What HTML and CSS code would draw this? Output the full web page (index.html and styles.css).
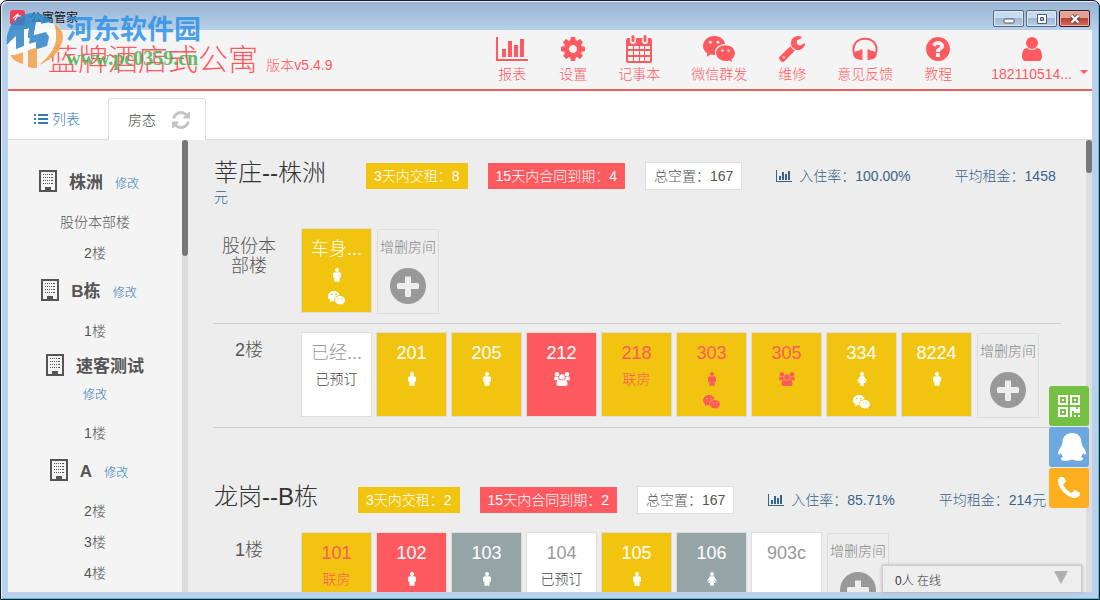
FILE: index.html
```
<!DOCTYPE html>
<html lang="zh-CN">
<head>
<meta charset="utf-8">
<title>公寓管家</title>
<link rel="stylesheet" href="styles.css">
</head>
<body>
<svg class="sprite" aria-hidden="true">
  <symbol id="chart" viewBox="0 0 32 24"><path d="M0 0h2v22h30v2H0zM6 12h4v8H6zM12 4h4v16h-4zM18 8h4v12h-4zM24 2h4v18h-4z"/></symbol>
  <symbol id="cog" viewBox="128 128 1536 1536"><path d="M1152 896q0-106-75-181t-181-75-181 75-75 181 75 181 181 75 181-75 75-181zm512-109v222q0 12-8 23t-20 13l-185 28q-19 54-39 91 35 50 107 138 10 12 10 25t-9 23q-27 37-99 108t-94 71q-12 0-26-9l-138-108q-44 23-91 38-16 136-29 186-7 28-36 28h-222q-14 0-24.500-8.500t-11.500-21.500l-28-184q-49-16-90-37l-141 107q-10 9-25 9-14 0-25-11-126-114-165-168-7-10-7-23 0-12 8-23 15-21 51-66.500t54-70.500q-27-50-41-99l-183-27q-13-2-21-12.500t-8-23.500v-222q0-12 8-23t19-13l186-28q14-46 39-92-40-57-107-138-10-12-10-24 0-10 9-23 26-36 98.500-107.500t94.500-71.500q13 0 26 10l138 107q44-23 91-38 16-136 29-186 7-28 36-28h222q14 0 24.500 8.500t11.500 21.500l28 184q49 16 90 37l142-107q9-9 24-9 13 0 25 10 129 119 165 170 7 8 7 22 0 12-8 23-15 21-51 66.500t-54 70.500q26 50 41 98l183 28q13 2 21 12.500t8 23.500z"/></symbol>
  <symbol id="calendar" viewBox="0 0 26 28"><path fill-rule="evenodd" d="M2 3h2v3a3 3 0 0 0 6 0V3h6v3a3 3 0 0 0 6 0V3h2a2 2 0 0 1 2 2v21a2 2 0 0 1-2 2H2a2 2 0 0 1-2-2V5a2 2 0 0 1 2-2zM2 11v3h5v-3zM8 11v3h5v-3zM14 11v3h4v-3zM19 11v3h5v-3zM2 16v4h5v-4zM8 16v4h5v-4zM14 16v4h4v-4zM19 16v4h5v-4zM2 22v4h5v-4zM8 22v4h5v-4zM14 22v4h4v-4zM19 22v4h5v-4z"/><rect x="5.500" width="3" height="7" rx="1.500"/><rect x="17.500" width="3" height="7" rx="1.500"/></symbol>
  <symbol id="wechat" viewBox="0 0 32 26"><path fill-rule="evenodd" d="M11 0c6 0 10.500 3.500 11 8-6 0-10.500 4-10 9.500l.3 1.500c-2 .2-3 0-4.800-.4L3.500 21l1-3.600C1.500 15.500 0 13 0 10 0 4.500 5 0 11 0zM7.400 4.800a1.500 1.500 0 1 0 .01 0zM15 4.800a1.500 1.500 0 1 0 .01 0z"/><path fill-rule="evenodd" d="M22.500 9.200c5.300 0 9.500 3.600 9.500 8 0 2.500-1.500 4.600-3.600 6.200l.7 2.600-3-1.600c-1.200.4-2.400.6-3.600.6-5.300 0-9.500-3.500-9.500-7.900s4.200-7.900 9.500-7.900zM19.400 13.300a1.200 1.200 0 1 0 .01 0zM25.500 13.300a1.200 1.200 0 1 0 .01 0z"/></symbol>
  <symbol id="wrench" viewBox="85 128 1641 1643"><path d="M448 1472q0-26-19-45t-45-19-45 19-19 45 19 45 45 19 45-19 19-45zm644-420l-682 682q-37 37-90 37-52 0-91-37l-106-108q-38-36-38-90 0-53 38-91l681-681q39 98 114.500 173.500t173.500 114.500zm634-435q0 39-23 106-47 134-164.500 217.500t-258.500 83.500q-185 0-316.500-131.500t-131.500-316.500 131.500-316.500 316.500-131.500q58 0 121.500 16.500t107.500 46.500q16 11 16 28t-16 28l-293 169v224l193 107q5-3 79-48.500t135.500-81 70.500-35.500q15 0 23.500 10t8.500 25z"/></symbol>
  <symbol id="headphones" viewBox="0 0 26 23"><path d="M2.200 16C-.5 8 4.500 1.200 13 1.200S26.500 8 23.800 16" fill="none" stroke="currentColor" stroke-width="2"/><path d="M10.500 12v10.500H8V22c-4 0-6-2-7-5 1.500-2.500 3.500-4 7-4v-1zM15.500 12v10.500H18V22c4 0 6-2 7-5-1.500-2.500-3.500-4-7-4v-1z"/></symbol>
  <symbol id="help" viewBox="128 128 1536 1536"><path d="M1024 1376v-192q0-14-9-23t-23-9h-192q-14 0-23 9t-9 23v192q0 14 9 23t23 9h192q14 0 23-9t9-23zm256-672q0-88-55.500-163t-138.500-116-170-41q-243 0-371 213-15 24 8 42l132 100q7 6 19 6 16 0 25-12 53-68 86-92 34-24 86-24 48 0 85.500 26t37.500 59q0 38-20 61t-68 45q-63 28-115.500 86.500t-52.500 125.500v36q0 14 9 23t23 9h192q14 0 23-9t9-23q0-19 21.500-49.500t54.500-49.500q32-18 49-28.500t46-35 44.500-48 28-60.500 12.500-81zm384 192q0 209-103 385.500t-279.500 279.500-385.500 103-385.500-103-279.500-279.500-103-385.500 103-385.500 279.500-279.500 385.500-103 385.500 103 279.500 279.500 103 385.500z"/></symbol>
  <symbol id="user" viewBox="256 128 1280 1536"><path d="M1536 1399q0 109-62.500 187t-150.500 78h-854q-88 0-150.500-78t-62.500-187q0-85 8.500-160.500t31.500-152 58.500-131 94-89 134.500-34.500q131 128 313 128t313-128q76 0 134.500 34.500t94 89 58.500 131 31.500 152 8.500 160.500zm-256-887q0 159-112.500 271.500t-271.500 112.500-271.500-112.500-112.500-271.500 112.500-271.500 271.500-112.500 271.500 112.500 112.500 271.500z"/></symbol>
  <symbol id="list" viewBox="0 0 14 12"><path d="M0 1h2v2H0zM4 1h10v2H4zM0 5h2v2H0zM4 5h10v2H4zM0 9h2v2H0zM4 9h10v2H4z"/></symbol>
  <symbol id="refresh" viewBox="128 128 1536 1536"><path d="M1639 1056q0 5-1 7-64 268-268 434.500t-478 166.500q-146 0-282.500-55t-243.500-157l-129 129q-19 19-45 19t-45-19-19-45v-448q0-26 19-45t45-19h448q26 0 45 19t19 45-19 45l-137 137q71 66 161 102t187 36q134 0 250-65t186-179q11-17 53-117 8-23 30-23h192q13 0 22.500 9.500t9.500 22.500zm25-800v448q0 26-19 45t-45 19h-448q-26 0-45-19t-19-45 19-45l138-138q-148-137-349-137-134 0-250 65t-186 179q-11 17-53 117-8 23-30 23h-199q-13 0-22.500-9.500t-9.500-22.500v-7q65-268 270-434.500t480-166.500q146 0 284 55.500t245 156.500l130-129q19-19 45-19t45 19 19 45z"/></symbol>
  <symbol id="building" viewBox="0 0 18 22"><path fill-rule="evenodd" d="M0 0h18v22H0zM2 2v18h4v-3h6v3h4V2z"/><path d="M4 4h1v1H4zM6 4h1v1H6zM8 4h1v1H8zM10 4h1v1h-1zM12 4h2v1h-2zM4 7h1v1H4zM6 7h1v1H6zM8 7h1v1H8zM10 7h1v1h-1zM12 7h2v1h-2zM4 10h1v1H4zM6 10h1v1H6zM8 10h1v1H8zM10 10h1v1h-1zM12 10h2v1h-2zM4 13h1v1H4zM6 13h1v1H6zM8 13h1v1H8zM10 13h1v1h-1zM12 13h2v1h-2z"/><path d="M7 18h4v3H7z"/></symbol>
  <symbol id="male" viewBox="0 0 10 14"><circle cx="5" cy="2" r="2"/><path d="M3 4.200h4c1.200 0 2 .8 2 2V9c0 1-1.400 1-1.400 0v4c0 1.200-2.200 1.200-2.600.3-.4.900-2.600.9-2.600-.3V9C2.400 10 1 10 1 9V6.200c0-1.200.8-2 2-2z"/></symbol>
  <symbol id="female" viewBox="0 0 10 14"><circle cx="5" cy="2" r="2"/><path d="M3.700 4.200h2.600c.7 0 1 .4 1.400 1L9.700 8.400c.5.900-.5 1.500-1.100.7L7.400 7.400v.7L9 11H6.900v2.300c0 .9-1.600.9-1.900 0-.3.900-1.900.9-1.900 0V11H1l1.600-2.900v-.7L1.400 9.100C.8 9.900-.2 9.300.3 8.400l2-3.200c.4-.6.700-1 1.400-1z"/></symbol>
  <symbol id="group" viewBox="0 0 16 14"><circle cx="3" cy="2.200" r="2.200"/><circle cx="13" cy="2.200" r="2.200"/><circle cx="8" cy="5" r="2.800"/><path d="M1.500 4.500C0 5 0 7 .3 8.300h3.400c.3-.5.800-.8 1.300-1-.6-.8-.8-1.600-.7-2.400zM14.500 4.500C16 5 16 7 15.700 8.300h-3.400c-.3-.5-.8-.8-1.300-1 .6-.8.8-1.600.7-2.400z"/><path d="M5.200 7.400c1.700 1.400 3.900 1.400 5.600 0 2.300.3 2.700 2.600 2.700 4.600 0 1.300-.7 2-2 2h-7c-1.300 0-2-.7-2-2 0-2 .4-4.300 2.700-4.600z"/></symbol>
  <symbol id="plus" viewBox="0 0 36 36"><path fill-rule="evenodd" d="M18 0a18 18 0 1 0 0 36 18 18 0 0 0 0-36zM15 8.500h6V15h6.500q1.500 0 1.500 1.500v3q0 1.500-1.500 1.500H21v6.500q0 1.500-1.500 1.500h-3q-1.500 0-1.500-1.500V21H8.500Q7 21 7 19.500v-3Q7 15 8.500 15H15z"/></symbol>
  <symbol id="qrcode" viewBox="0 0 22 22"><path fill-rule="evenodd" d="M0 0h10v10H0zM2 2v6h6V2zM12 0h10v10H12zM14 2v6h6V2zM0 12h10v10H0zM2 14v6h6v-6zM4 4h2v2H4zM16 4h2v2h-2zM4 16h2v2H4zM12 12h6v2h2v-2h2v6h-6v-2h-2v6h-2zM16 20h2v2h-2zM20 20h2v2h-2z"/></symbol>
  <symbol id="qq" viewBox="0 0 28 28"><path d="M14 0c6 0 9.500 4 9.500 9.500 0 1.200.8 2 1 3.500 2 2.500 3.500 5.500 3.500 7.500 0 1.500-1.200 1.500-2.800-.5-.4 1.500-1.200 2.800-2.200 3.800 3 1.200 3 4-2 4-3 0-5-.4-7-1.300-2 .9-4 1.300-7 1.300-5 0-5-2.800-2-4-1-1-1.800-2.300-2.200-3.800C1.200 22 0 22 0 20.500c0-2 1.500-5 3.500-7.500.2-1.500 1-2.300 1-3.500C4.500 4 8 0 14 0z"/></symbol>
  <symbol id="phone" viewBox="192 256 1408 1280"><path d="M1600 1240q0 27-10 70.500t-21 68.500q-21 50-122 106-94 51-186 51-27 0-53-3.500t-57.500-12.500-47-14.500-55.500-20.500-49-18q-98-35-175-83-127-79-264-216t-216-264q-48-77-83-175-3-9-18-49t-20.500-55.500-14.500-47-12.500-57.500-3.500-53q0-92 51-186 56-101 106-122 25-11 68.500-21t70.500-10q14 0 21 3 18 6 53 76 11 19 30 54t35 63.500 31 53.500q3 4 17.500 25t21.500 35.500 7 28.500q0 20-28.500 50t-62 55-62 53-28.500 46q0 9 5 22.500t8.500 20.500 14 24 11.500 19q76 137 174 235t235 174q2 1 19 11.500t24 14 20.500 8.500 22.500 5q18 0 46-28.500t53-62 55-62 50-28.500q14 0 28.500 7t35.500 21.500 25 17.500q25 15 53.500 31t63.500 35 54 30q70 35 76 53 3 7 3 21z"/></symbol>
</svg>

<div class="window">
  <div class="titlebar">
    <svg class="app-icon" viewBox="0 0 16 16"><rect width="16" height="16" rx="3" fill="#ef4056"/><path d="M3 9l6-5M5 11l3-5 5 1M6 13V9" fill="none" stroke="#fff" stroke-width="1.200"/></svg>
    <span class="app-title">公寓管家</span>
    <div class="controls">
      <button class="control" aria-label="最小化"><svg viewBox="0 0 12 10"><rect x="1" y="5" width="10" height="4" rx="1" fill="#fff" stroke="#4d5a70"/></svg></button>
      <button class="control" aria-label="最大化"><svg viewBox="0 0 12 10"><path d="M1.500.5h9v9h-9zM4.500 3.500v3h3v-3z" fill="#fff" fill-rule="evenodd" stroke="#4d5a70"/></svg></button>
      <button class="control control--close" aria-label="关闭"><svg viewBox="0 0 12 10"><path d="M2.500 1.500l7 7m0-7l-7 7" stroke="#54404a" stroke-width="4"/><path d="M2.500 1.500l7 7m0-7l-7 7" stroke="#fff" stroke-width="2.400"/></svg></button>
    </div>
  </div>

  <div class="app">
    <header class="header">
      <h1 class="brand">蓝牌酒店式公寓 <small class="version">版本v5.4.9</small></h1>
      <nav class="nav">
        <a class="nav-item" href="#"><svg class="ico-chart"><use href="#chart"/></svg>报表</a>
        <a class="nav-item" href="#"><svg class="ico-24"><use href="#cog"/></svg>设置</a>
        <a class="nav-item" href="#"><svg class="ico-calendar"><use href="#calendar"/></svg>记事本</a>
        <a class="nav-item" href="#"><svg class="ico-wechat"><use href="#wechat"/></svg>微信群发</a>
        <a class="nav-item" href="#"><svg class="ico-26"><use href="#wrench"/></svg>维修</a>
        <a class="nav-item" href="#"><svg class="ico-26"><use href="#headphones"/></svg>意见反馈</a>
        <a class="nav-item" href="#"><svg class="ico-24"><use href="#help"/></svg>教程</a>
        <a class="nav-user" href="#"><span class="nav-item"><svg class="ico-24"><use href="#user"/></svg>182110514...</span><span class="caret"></span></a>
      </nav>
    </header>

    <div class="tabs">
      <a class="tab" href="#"><svg class="ico-list"><use href="#list"/></svg>列表</a>
      <a class="tab tab--active" href="#">房态<svg class="ico-refresh"><use href="#refresh"/></svg></a>
    </div>

    <div class="body">
      <aside class="sidebar">
        <h3 class="site"><svg class="ico-building"><use href="#building"/></svg>株洲<a class="edit" href="#">修改</a></h3>
        <a class="floor-link" href="#">股份本部楼</a>
        <a class="floor-link" href="#">2楼</a>
        <h3 class="site"><svg class="ico-building"><use href="#building"/></svg>B栋<a class="edit" href="#">修改</a></h3>
        <a class="floor-link" href="#">1楼</a>
        <h3 class="site site--long"><svg class="ico-building"><use href="#building"/></svg>速客测试 <a class="edit" href="#">修改</a></h3>
        <a class="floor-link" href="#">1楼</a>
        <h3 class="site"><svg class="ico-building"><use href="#building"/></svg>A<a class="edit" href="#">修改</a></h3>
        <a class="floor-link" href="#">2楼</a>
        <a class="floor-link" href="#">3楼</a>
        <a class="floor-link" href="#">4楼</a>
      </aside>
      <div class="scrollbar"><div class="thumb thumb--side"></div></div>

      <main class="main">
        <section class="block">
          <div class="summary">
            <h2 class="block-title">莘庄--株洲</h2><span class="badge badge--yellow">3天内交租：8</span><span class="badge badge--red">15天内合同到期：4</span><span class="badge badge--white">总空置：167</span><span class="stat"><svg class="ico-stat"><use href="#chart"/></svg>入住率：100.00%</span><span class="rent">平均租金：1458元</span>
          </div>
          <div class="floor">
            <div class="floor-name">股份本部楼</div>
            <div class="rooms">
              <button class="room room--yellow"><span class="room-no">车身...</span><svg class="ico-person"><use href="#male"/></svg><svg class="ico-chat"><use href="#wechat"/></svg></button>
              <button class="add-room">增删房间<svg class="ico-plus"><use href="#plus"/></svg></button>
            </div>
          </div>
          <div class="floor">
            <div class="floor-name">2楼</div>
            <div class="rooms">
              <button class="room room--white"><span class="room-no">已经...</span><span class="note">已预订</span></button>
              <button class="room room--yellow"><span class="room-no">201</span><svg class="ico-person"><use href="#male"/></svg></button>
              <button class="room room--yellow"><span class="room-no">205</span><svg class="ico-person"><use href="#male"/></svg></button>
              <button class="room room--red"><span class="room-no">212</span><svg class="ico-group"><use href="#group"/></svg></button>
              <button class="room room--yellow room--due"><span class="room-no">218</span><span class="note">联房</span></button>
              <button class="room room--yellow room--due"><span class="room-no">303</span><svg class="ico-person"><use href="#male"/></svg><svg class="ico-chat"><use href="#wechat"/></svg></button>
              <button class="room room--yellow room--due"><span class="room-no">305</span><svg class="ico-group"><use href="#group"/></svg></button>
              <button class="room room--yellow"><span class="room-no">334</span><svg class="ico-person"><use href="#female"/></svg><svg class="ico-chat"><use href="#wechat"/></svg></button>
              <button class="room room--yellow"><span class="room-no">8224</span><svg class="ico-person"><use href="#male"/></svg></button>
              <button class="add-room">增删房间<svg class="ico-plus"><use href="#plus"/></svg></button>
            </div>
          </div>
        </section>

        <section class="block">
          <div class="summary">
            <h2 class="block-title">龙岗--B栋</h2><span class="badge badge--yellow">3天内交租：2</span><span class="badge badge--red">15天内合同到期：2</span><span class="badge badge--white">总空置：167</span><span class="stat"><svg class="ico-stat"><use href="#chart"/></svg>入住率：85.71%</span><span class="rent">平均租金：214元</span>
          </div>
          <div class="floor">
            <div class="floor-name">1楼</div>
            <div class="rooms">
              <button class="room room--yellow room--due"><span class="room-no">101</span><span class="note">联房</span></button>
              <button class="room room--red"><span class="room-no">102</span><svg class="ico-person"><use href="#male"/></svg></button>
              <button class="room room--gray"><span class="room-no">103</span><svg class="ico-person"><use href="#male"/></svg></button>
              <button class="room room--white"><span class="room-no">104</span><span class="note">已预订</span></button>
              <button class="room room--yellow"><span class="room-no">105</span><svg class="ico-person"><use href="#male"/></svg></button>
              <button class="room room--gray"><span class="room-no">106</span><svg class="ico-person"><use href="#female"/></svg></button>
              <button class="room room--white"><span class="room-no">903c</span></button>
              <button class="add-room">增删房间<svg class="ico-plus"><use href="#plus"/></svg></button>
            </div>
          </div>
        </section>
      </main>
      <div class="scrollbar"><div class="thumb thumb--main"></div></div>

      <div class="dock">
        <button class="dock-btn dock-btn--green" aria-label="二维码"><svg class="ico-22"><use href="#qrcode"/></svg></button>
        <button class="dock-btn dock-btn--blue" aria-label="QQ"><svg class="ico-28"><use href="#qq"/></svg></button>
        <button class="dock-btn dock-btn--orange" aria-label="电话"><svg class="ico-22"><use href="#phone"/></svg></button>
      </div>
      <button class="online"><span>0人 在线</span><span class="online-arrow"></span></button>
    </div>
  </div>

  <div class="watermark">
    <svg class="wm-logo" viewBox="0 0 58 58"><path d="M1 33C-1 14 12 1 27 1c8 0 15 3 20 9-5 0-9 1-14 3-12 4-24 11-32 20z" fill="#2f86c8"/><path d="M1 33C10 22 26 12 40 11c12-1 18 6 16 16-3 12-12 20-23 26 8-9 14-20 12-27-2-6-12-4-22 1-9 5-15 10-20 12z" fill="#fff"/><path d="M10 20l8-5v20l-8 4zM24 12h6l-3 14h-6z" fill="#2f86c8"/><path d="M18 17h4v16h-4zM30 10h5l-3 20h-5z" fill="#fff"/><path d="M24 24l16-4 3 5-2 9-19 6z" fill="#2f86c8"/><path d="M4 42l13-5v15C10 50 6 47 4 42zM22 36h9v20c-3 0-6 0-9-1z" fill="#f5a04a"/><path d="M48 12c9 4 11 13 7 21-4 10-12 16-22 20C46 42 51 32 50 24c0-5 0-8-2-12z" fill="#f5a04a"/><path d="M3 39c8-1 16-7 27-9v6C20 38 11 44 4 43z" fill="#fff"/></svg>
    <div class="wm-text"><span class="wm-name">河东软件园</span><span class="wm-url">www.pc0359.cn</span></div>
  </div>
</div>
</body>
</html>
```
FILE: styles.css
```
* { box-sizing: border-box; }

body {
  margin: 0;
  background: #fff;
  color: #555;
  font: 14px/20px "Liberation Sans", "Noto Sans CJK SC", sans-serif;
  font-weight: 300;
}

a { color: inherit; text-decoration: none; }
button { font: inherit; padding: 0; border: 0; }
svg { fill: currentColor; flex: none; }
.sprite { display: none; }

.window {
  position: relative;
  height: 100vh;
  display: flex;
  flex-direction: column;
  padding: 0 6px 6px;
  background: linear-gradient(#98b2d1, #b9d1ea 30px);
  border: 1px solid #1b1b26;
  border-radius: 7px 7px 0 0;
  box-shadow: inset 1px 1px #e8f1fa, inset -1px -1px #45c4e0;
  overflow: hidden;
}

.titlebar {
  height: 29px;
  flex: none;
  display: flex;
  align-items: center;
  gap: 5px;
  padding: 4px 0 0 3px;
  color: #111;
  font-size: 12px;
  font-weight: 400;
}
.app-icon { width: 15px; height: 15px; }
.controls { display: flex; gap: 2px; margin: 2px 3px 0 auto; }
.control {
  width: 31px;
  height: 17px;
  display: flex;
  align-items: center;
  justify-content: center;
  border: 1px solid #56677f;
  border-radius: 2px;
  background: linear-gradient(#c9dbee 50%, #9fb9d6 50%, #b7cde5);
  box-shadow: inset 0 0 0 1px #dbe8f5;
}
.control--close {
  border-color: #43141c;
  background: linear-gradient(#e0a397 50%, #bb4030 50%, #d0705c);
  box-shadow: inset 0 0 0 1px #e6b0a8;
}
.control svg { width: 12px; height: 10px; }

.app {
  flex: 1;
  min-height: 0;
  display: flex;
  flex-direction: column;
  margin: 0 1px 1px;
  background: #fff;
}

.header {
  display: flex;
  justify-content: space-between;
  flex: none;
  height: 61px;
  padding: 0 4px 0 40px;
  background: #f4f4f4;
  border-bottom: 2px solid #e8605f;
  color: #ff5a5f;
}
.brand { margin: 0; padding-top: 10px; font-size: 30px; line-height: 40px; font-weight: 300; white-space: nowrap; }
.version { font-size: 14px; }
.nav { display: flex; gap: 31px; white-space: nowrap; }
.nav-item { display: flex; flex-direction: column; align-items: center; padding-top: 5px; }
.nav-item svg { height: 28px; margin-bottom: 1px; }
.ico-chart { width: 32px; }
.ico-24 { width: 24px; padding: 2px 0; }
.ico-26 { width: 26px; padding: 1px 0; }
.ico-calendar { width: 26px; }
.ico-wechat { width: 32px; }
.nav-item .ico-chart { padding: 2px 0; }
.nav-user { display: flex; gap: 8px; margin-left: 8px; }
.caret { align-self: center; margin-top: 25px; border: 4px solid transparent; border-top-color: currentColor; border-bottom: 0; }

.tabs { display: flex; align-items: flex-end; flex: none; height: 49px; border-bottom: 1px solid #ddd; }
.tab { display: flex; align-items: center; gap: 4px; width: 100px; height: 41px; padding-left: 26px; color: #337ab7; }
.tab--active {
  gap: 16px;
  width: 98px;
  height: 42px;
  margin-bottom: -1px;
  padding-left: 19px;
  background: #fff;
  border: 1px solid #ddd;
  border-bottom: 0;
  border-radius: 4px 4px 0 0;
  color: #444;
}
.ico-list { width: 14px; height: 12px; }
.ico-refresh { width: 18px; height: 18px; color: #c4c4c4; }

.body { position: relative; flex: 1; min-height: 0; display: flex; background: #ededed; }
.sidebar { width: 174px; flex: none; padding: 20px 16px 0; background: #f4f4f4; text-align: center; overflow: hidden; }
.site { margin: 9px 0 11px; font-size: 17px; line-height: 27px; font-weight: 700; color: #555; }
.site--long { margin-top: 6px; }
.ico-building { width: 18px; height: 22px; margin-right: 12px; vertical-align: -4px; }
.edit { display: inline-block; margin: 0 12px; font-size: 12px; line-height: 16px; font-weight: 300; color: #337ab7; }
.floor-link { display: block; line-height: 31px; }

.scrollbar { width: 6px; flex: none; background: #ddd; }
.thumb { border-radius: 3px; background: #777; }
.thumb--side { height: 116px; }
.thumb--main { height: 33px; }

.main { flex: 1; min-width: 0; padding: 19px 25px 0 26px; overflow: hidden; }
.block { margin-bottom: 55px; }
.summary { color: #36648b; margin-bottom: 21px; }
.block-title { display: inline; margin-right: 40px; font-size: 24px; line-height: 28px; font-weight: 300; color: #333; }
.badge { margin-right: 20px; padding: 5px 8px; color: #fff; white-space: nowrap; }
.badge--yellow { background: #f1c40f; }
.badge--red { background: #ff5a5f; }
.badge--white { margin-right: 34px; border: 1px solid #ddd; background: #fff; color: #555; }
.stat { margin-right: 44px; white-space: nowrap; }
.ico-stat { width: 16px; height: 12px; margin-right: 7px; vertical-align: -1px; }

.floor { display: flex; gap: 17px; padding-bottom: 10px; border-bottom: 1px solid #ccc; margin-bottom: 8px; }
.floor-name { width: 70px; flex: none; padding: 8px 8px 0; font-size: 18px; text-align: center; }
.rooms { display: flex; gap: 4px; }
.room {
  width: 71px;
  height: 85px;
  display: flex;
  flex-direction: column;
  align-items: center;
  padding-top: 10px;
  border: 1px solid #ddd;
  color: #fff;
}
.room--yellow { background: #f1c40f; }
.room--red { background: #ff5a5f; }
.room--gray { background: #95a5a6; }
.room--white { background: #fff; color: #999; }
.room--due { color: #ff5a5f; }
.room-no { font-size: 18px; margin-bottom: 6px; }
.room--white .note { color: #444; }
.ico-person { width: 10px; height: 14px; margin: 3px 0 9px; }
.ico-group { width: 16px; height: 14px; margin: 3px 0 9px; }
.ico-chat { width: 17px; height: 14px; }
.add-room {
  width: 62px;
  height: 85px;
  display: flex;
  flex-direction: column;
  align-items: center;
  gap: 11px;
  margin: 1px 0 -1px 1px;
  padding-top: 7px;
  border: 1px solid #ddd;
  background: transparent;
  color: #888;
  white-space: nowrap;
}
.ico-plus { width: 36px; height: 36px; color: #999; }

.dock { position: absolute; right: 3px; top: 246px; display: grid; gap: 1px; }
.dock-btn { width: 40px; height: 40px; display: grid; place-items: center; border-radius: 3px; color: #fff; }
.dock-btn--green { background: #76c043; }
.dock-btn--blue { background: #6ea8e0; }
.dock-btn--orange { background: #fdaf20; }
.ico-22 { width: 22px; height: 22px; }
.ico-28 { width: 28px; height: 28px; margin-left: 6px; }

.online {
  position: absolute;
  right: 10px;
  bottom: 0;
  width: 200px;
  height: 27px;
  display: flex;
  align-items: center;
  justify-content: space-between;
  padding: 4px 13px 0 12px;
  border: 1px solid #ccc;
  border-bottom: 0;
  background: #eee;
  box-shadow: 0 0 3px #aaa;
  color: #333;
  font-size: 12px;
}
.online-arrow { border: 7px solid transparent; border-top: 13px solid #b0b0b0; border-bottom: 0; margin-bottom: 8px; }

.watermark { position: absolute; left: 5px; top: 11px; display: flex; gap: 2px; opacity: .85; pointer-events: none; }
.wm-logo { width: 58px; height: 58px; }
.wm-text { display: flex; flex-direction: column; }
.wm-name { font-size: 27px; line-height: 36px; font-weight: 700; color: #2f92e6; }
.wm-url { font: 700 20px/20px "Liberation Serif", serif; color: #4caf50; }
```
